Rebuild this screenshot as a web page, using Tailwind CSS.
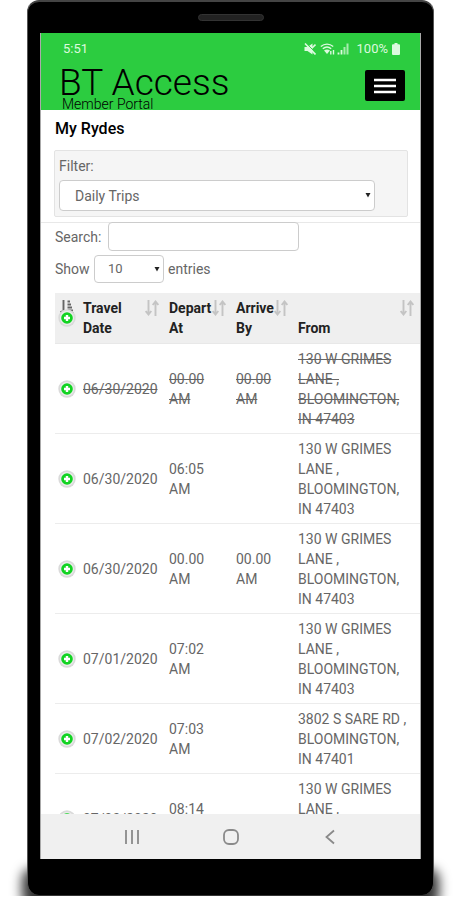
<!DOCTYPE html>
<html lang="en">
<head>
  <meta charset="UTF-8" />
  <meta name="viewport" content="width=device-width, initial-scale=1.0"/>
  <title>BT Access - My Rydes</title>
  <script src="https://cdn.jsdelivr.net/npm/@tailwindcss/browser@4"></script>
</head>
<body class="bg-white font-[Roboto,sans-serif] text-sm leading-5 text-[#666]">

  <!-- Shared icons -->
  <svg class="hidden">
    <symbol id="sort" viewBox="0 0 14 16">
      <path d="M3.500 0v14M0.700 11l2.800 3.500L6.300 11M10.500 16V2M7.700 5l2.800-3.500L13.300 5" fill="none" stroke="currentColor" stroke-width="1.900"/>
    </symbol>
    <symbol id="sortAsc" viewBox="0 0 14 16">
      <path d="M3.500 0v14M0.700 11l2.800 3.500L6.300 11M7.500 1.500h2.500M7.500 4.500h3.500M7.500 7.500h4.500M7.500 10.500h5.500M7.500 13.500h6.500" fill="none" stroke="currentColor" stroke-width="1.900"/>
    </symbol>
    <symbol id="plus" viewBox="0 0 18 18">
      <circle cx="9" cy="9" r="8.700" fill="#dadada"/>
      <circle cx="9" cy="9" r="7" fill="#ececec"/>
      <circle cx="9" cy="9" r="5.800" fill="#12d322"/>
      <path d="M9 6v6M6 9h6" stroke="#fff" stroke-width="2.400"/>
    </symbol>
    <symbol id="caret" viewBox="0 0 6 6">
      <path d="M0.500 1h5L3 5.500z" fill="#222"/>
    </symbol>
  </svg>

  <div class="relative isolate h-screen px-[27px] pb-[5px]">
    <!-- Shadow under the phone -->
    <div class="absolute inset-x-0 bottom-1 -z-10 h-12 overflow-hidden">
      <div class="mx-[22px] mt-5 h-10 rounded-xl bg-black/80 blur-[6px]"></div>
    </div>

    <!-- Phone -->
    <div class="flex h-full flex-col rounded-t-xl rounded-b-xl border-x border-t-2 border-x-[#555] border-t-[#444] bg-black px-3 pb-9">
      <div class="flex h-[31px] shrink-0 items-center justify-center">
        <div class="h-[7px] w-[66px] rounded-full border border-[#333] bg-[#222]"></div>
      </div>

      <div class="flex min-h-0 flex-1 flex-col border-x border-[#aaa] bg-white">
        <!-- Header -->
        <header class="shrink-0 bg-[#2ccc40] text-black">
          <div class="flex h-8 items-center pr-5 pl-[22px] text-[13px] text-[#dcfadf]">
            <span>5:51</span>
            <svg class="ml-auto h-3 w-3" viewBox="0 0 12 12">
              <path d="M0.500 4h3L8.500 0.500v11L3.500 8h-3z" fill="currentColor"/>
              <path d="M2 0l9 9" stroke="#2ccc40" stroke-width="1"/>
              <path d="M1 0.500l10.500 11M11.500 1.500L8 5" stroke="currentColor" stroke-width="1.600"/>
            </svg>
            <svg class="ml-1 h-3 w-[15px]" viewBox="0 0 15 12">
              <path d="M0.800 3.500C4.500 0.300 9.500 0.300 13.200 3.500M2.800 5.800c2.600-2.200 5.800-2.200 8.400 0" fill="none" stroke="currentColor" stroke-width="1.400"/>
              <path d="M4 7.500c2-1.500 4-1.500 6 0L7 11z" fill="currentColor"/>
              <path d="M10.800 11.500v-3.500M13.500 7v4.500" stroke="currentColor" stroke-width="1.400"/>
            </svg>
            <svg class="ml-0.5 h-3 w-3" viewBox="0 0 12 12">
              <path d="M1.500 11.500v-2M4.500 11.500v-4.500" stroke="currentColor" stroke-width="1.800"/>
              <path d="M7.500 11.500V4M10.500 11.500V0.500" stroke="currentColor" stroke-width="2" opacity="0.700"/>
            </svg>
            <span class="ml-2">100%</span>
            <svg class="ml-1 h-3 w-2" viewBox="0 0 8 12">
              <path d="M2.500 0h3v1.300H7a1 1 0 0 1 1 1V11a1 1 0 0 1-1 1H1a1 1 0 0 1-1-1V2.300a1 1 0 0 1 1-1h1.500z" fill="currentColor"/>
            </svg>
          </div>
          <div class="flex items-start justify-between pt-0.5 pr-[15px] pl-[18px]">
            <div>
              <h1 class="text-[37px] leading-8 font-light">BT Access</h1>
              <p class="pl-[3px] text-sm leading-[11px] font-light">Member Portal</p>
            </div>
            <button aria-label="Menu" class="mt-[3px] flex h-[31px] w-10 items-center justify-center rounded-xs bg-black text-white">
              <svg class="h-4 w-[22px]" viewBox="0 0 22 16">
                <path d="M0 2h22M0 8h22M0 14h22" stroke="currentColor" stroke-width="2.400"/>
              </svg>
            </button>
          </div>
        </header>

        <main class="min-h-0 flex-1 overflow-hidden">
          <h2 class="px-[14px] pt-[9px] pb-[11px] text-base leading-5 font-medium text-black">My Rydes</h2>

          <!-- Filter -->
          <div class="mr-3 ml-[13px] rounded-xs border border-[#e3e3e3] bg-[#f5f5f5] px-1 pt-[5px] pb-[5px]">
            <label for="filter" class="block">Filter:</label>
            <div class="relative mt-1 mr-7">
              <select id="filter" class="block h-[31px] w-full appearance-none rounded-sm border border-[#ccc] bg-white px-[15px]">
                <option>Daily Trips</option>
              </select>
              <svg class="pointer-events-none absolute top-3 right-1 h-1.5 w-1.5"><use href="#caret"/></svg>
            </div>
          </div>

          <div class="mt-[5px] flex items-center border-t border-[#e8e8e8] pl-[14px]">
            <label for="search" class="w-[53px]">Search:</label>
            <input id="search" type="text" class="-mt-px h-[29px] w-[191px] rounded-sm border border-[#ccc] bg-white px-2"/>
          </div>
          <div class="mt-1 flex items-center pl-[14px]">
            <label for="entries" class="w-[39px]">Show</label>
            <div class="relative mr-1 w-[70px]">
              <select id="entries" class="block h-7 w-full appearance-none rounded-sm border border-[#ccc] bg-white px-[13px] text-[13px]">
                <option>10</option>
              </select>
              <svg class="pointer-events-none absolute top-[11px] right-1 h-1.5 w-1.5"><use href="#caret"/></svg>
            </div>
            <span>entries</span>
          </div>

          <!-- Trips -->
          <div class="mt-2.5 pl-[14px]">
            <table class="w-full table-fixed border-separate border-spacing-0 text-left [&_td]:border-b [&_td]:border-[#ececec] [&_td]:pt-[5px] [&_td]:pr-2 [&_td]:pb-1 [&_td]:pl-1 [&_td:first-child]:px-[3px] [&_th]:relative [&_th]:border-b [&_th]:border-[#e8e8e8] [&_th]:py-[5px] [&_th]:pr-5 [&_th]:pl-1 [&_th]:align-bottom [&_th]:font-bold">
              <colgroup>
                <col class="w-6"/>
                <col class="w-[86px]"/>
                <col class="w-[67px]"/>
                <col class="w-[62px]"/>
                <col/>
              </colgroup>
              <thead class="bg-[#efefef] text-[#222]">
                <tr>
                  <th>
                    <svg class="absolute top-[7px] left-[5px] h-4 w-3.5 text-[#666]"><use href="#sortAsc"/></svg>
                    <svg class="absolute top-4 left-[3px] h-[18px] w-[18px]"><use href="#plus"/></svg>
                  </th>
                  <th>Travel Date<svg class="absolute top-[7px] right-1.5 h-4 w-3.5 text-[#c4c4c4]"><use href="#sort"/></svg></th>
                  <th>Depart At<svg class="absolute top-[7px] right-1.5 h-4 w-3.5 text-[#c4c4c4]"><use href="#sort"/></svg></th>
                  <th>Arrive By<svg class="absolute top-[7px] right-1.5 h-4 w-3.5 text-[#c4c4c4]"><use href="#sort"/></svg></th>
                  <th>From<svg class="absolute top-[7px] right-1.5 h-4 w-3.5 text-[#c4c4c4]"><use href="#sort"/></svg></th>
                </tr>
              </thead>
              <tbody>
                <tr class="line-through">
                  <td><button aria-label="Expand" class="block"><svg class="h-[18px] w-[18px]"><use href="#plus"/></svg></button></td>
                  <td>06/30/2020</td>
                  <td>00.00 AM</td>
                  <td>00.00 AM</td>
                  <td>130 W GRIMES LANE , BLOOMINGTON, IN 47403</td>
                </tr>
                <tr>
                  <td><button aria-label="Expand" class="block"><svg class="h-[18px] w-[18px]"><use href="#plus"/></svg></button></td>
                  <td>06/30/2020</td>
                  <td>06:05 AM</td>
                  <td></td>
                  <td>130 W GRIMES LANE , BLOOMINGTON, IN 47403</td>
                </tr>
                <tr>
                  <td><button aria-label="Expand" class="block"><svg class="h-[18px] w-[18px]"><use href="#plus"/></svg></button></td>
                  <td>06/30/2020</td>
                  <td>00.00 AM</td>
                  <td>00.00 AM</td>
                  <td>130 W GRIMES LANE , BLOOMINGTON, IN 47403</td>
                </tr>
                <tr>
                  <td><button aria-label="Expand" class="block"><svg class="h-[18px] w-[18px]"><use href="#plus"/></svg></button></td>
                  <td>07/01/2020</td>
                  <td>07:02 AM</td>
                  <td></td>
                  <td>130 W GRIMES LANE , BLOOMINGTON, IN 47403</td>
                </tr>
                <tr>
                  <td><button aria-label="Expand" class="block"><svg class="h-[18px] w-[18px]"><use href="#plus"/></svg></button></td>
                  <td>07/02/2020</td>
                  <td>07:03 AM</td>
                  <td></td>
                  <td>3802 S SARE RD , BLOOMINGTON, IN 47401</td>
                </tr>
                <tr>
                  <td><button aria-label="Expand" class="block"><svg class="h-[18px] w-[18px]"><use href="#plus"/></svg></button></td>
                  <td>07/03/2020</td>
                  <td>08:14 AM</td>
                  <td></td>
                  <td>130 W GRIMES LANE , BLOOMINGTON, IN 47403</td>
                </tr>
              </tbody>
            </table>
          </div>
        </main>

        <!-- Android navigation -->
        <nav class="flex h-[45px] shrink-0 items-center justify-center bg-[#f0f0f0] text-[#8a8a8a]">
          <button aria-label="Recent apps" class="flex w-[99px] justify-center">
            <svg class="h-4 w-4" viewBox="0 0 16 16"><path d="M2 1v14M8 1v14M14 1v14" stroke="currentColor" stroke-width="1.800"/></svg>
          </button>
          <button aria-label="Home" class="flex w-[99px] justify-center">
            <svg class="h-4 w-4" viewBox="0 0 16 16"><rect x="1" y="1" width="14" height="14" rx="5" fill="none" stroke="currentColor" stroke-width="1.800"/></svg>
          </button>
          <button aria-label="Back" class="flex w-[99px] justify-center">
            <svg class="h-4 w-4" viewBox="0 0 16 16"><path d="M12 1.500L4.500 8l7.500 6.500" fill="none" stroke="currentColor" stroke-width="1.800"/></svg>
          </button>
        </nav>
      </div>
    </div>
  </div>

</body>
</html>
